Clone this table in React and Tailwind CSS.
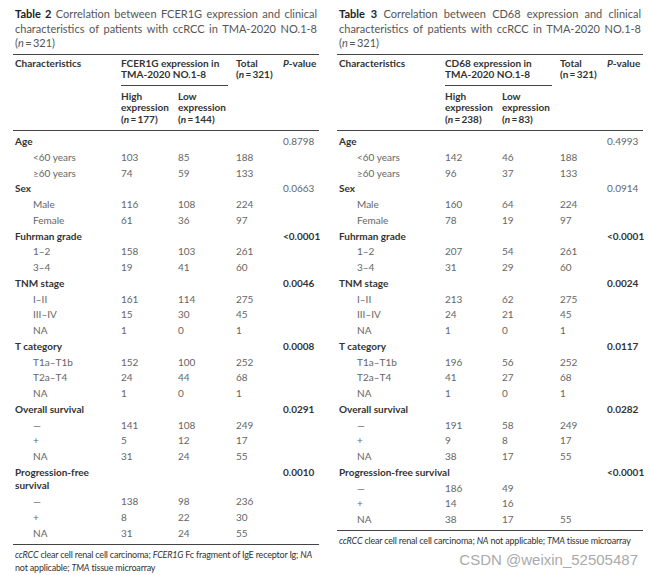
import React from "react";

const T2 = {
  num: "2",
  gene: "FCER1G",
  high: "177",
  low: "144",
  italicN: true,
  rows: [
    { cat: "Age", p: "0.8798" },
    { label: "<60 years", v: ["103", "85", "188"] },
    { label: "≥60 years", v: ["74", "59", "133"] },
    { cat: "Sex", p: "0.0663" },
    { label: "Male", v: ["116", "108", "224"] },
    { label: "Female", v: ["61", "36", "97"] },
    { cat: "Fuhrman grade", p: "<0.0001", bold: true },
    { label: "1–2", v: ["158", "103", "261"] },
    { label: "3–4", v: ["19", "41", "60"] },
    { cat: "TNM stage", p: "0.0046", bold: true },
    { label: "I–II", v: ["161", "114", "275"] },
    { label: "III–IV", v: ["15", "30", "45"] },
    { label: "NA", v: ["1", "0", "1"] },
    { cat: "T category", p: "0.0008", bold: true },
    { label: "T1a–T1b", v: ["152", "100", "252"] },
    { label: "T2a–T4", v: ["24", "44", "68"] },
    { label: "NA", v: ["1", "0", "1"] },
    { cat: "Overall survival", p: "0.0291", bold: true },
    { label: "—", v: ["141", "108", "249"] },
    { label: "+", v: ["5", "12", "17"] },
    { label: "NA", v: ["31", "24", "55"] },
    { cat: ["Progression-free", "survival"], p: "0.0010", bold: true },
    { label: "—", v: ["138", "98", "236"] },
    { label: "+", v: ["8", "22", "30"] },
    { label: "NA", v: ["31", "24", "55"] },
  ],
};

const T3 = {
  num: "3",
  gene: "CD68",
  high: "238",
  low: "83",
  italicN: false,
  rows: [
    { cat: "Age", p: "0.4993" },
    { label: "<60 years", v: ["142", "46", "188"] },
    { label: "≥60 years", v: ["96", "37", "133"] },
    { cat: "Sex", p: "0.0914" },
    { label: "Male", v: ["160", "64", "224"] },
    { label: "Female", v: ["78", "19", "97"] },
    { cat: "Fuhrman grade", p: "<0.0001", bold: true },
    { label: "1–2", v: ["207", "54", "261"] },
    { label: "3–4", v: ["31", "29", "60"] },
    { cat: "TNM stage", p: "0.0024", bold: true },
    { label: "I–II", v: ["213", "62", "275"] },
    { label: "III–IV", v: ["24", "21", "45"] },
    { label: "NA", v: ["1", "0", "1"] },
    { cat: "T category", p: "0.0117", bold: true },
    { label: "T1a–T1b", v: ["196", "56", "252"] },
    { label: "T2a–T4", v: ["41", "27", "68"] },
    { label: "NA", v: ["1", "0", "1"] },
    { cat: "Overall survival", p: "0.0282", bold: true },
    { label: "—", v: ["191", "58", "249"] },
    { label: "+", v: ["9", "8", "17"] },
    { label: "NA", v: ["38", "17", "55"] },
    { cat: ["Progression-free survival"], p: "<0.0001", bold: true },
    { label: "—", v: ["186", "49", ""] },
    { label: "+", v: ["14", "16", ""] },
    { label: "NA", v: ["38", "17", "55"] },
  ],
};

const N = ({ italic }) => (italic ? <i>n</i> : "n");

const Row = ({ row }) => {
  if (row.cat) {
    const lines = Array.isArray(row.cat) ? row.cat : [row.cat];
    return (
      <div className="grid grid-cols-[106px_57px_58px_47px_1fr]">
        <div className="col-span-4 font-bold text-[#333]">
          {lines.map((l, i) => (
            <div key={i} className={i > 0 ? "-mt-[3px] pb-[1px]" : ""}>{l}</div>
          ))}
        </div>
        <div className={row.bold ? "font-bold text-[#333]" : "text-[#666]"}>{row.p}</div>
      </div>
    );
  }
  return (
    <div className="grid grid-cols-[106px_57px_58px_47px_1fr] text-[#666]">
      <div className="pl-[18px]">{row.label}</div>
      <div>{row.v[0]}</div>
      <div>{row.v[1]}</div>
      <div>{row.v[2]}</div>
      <div />
    </div>
  );
};

const Table = ({ t, footnote }) => {
  const it = t.italicN;
  return (
    <div className="w-[306px] flex flex-col">
      <div className="px-[2px] text-[11px] leading-[14.5px] text-[#555]">
        <div className="text-justify [text-align-last:justify]">
          <span className="font-bold text-[#222]">Table {t.num}</span> Correlation between {t.gene} expression and clinical
        </div>
        <div className="text-justify [text-align-last:justify]">
          characteristics of patients with ccRCC in TMA-2020 NO.1-8
        </div>
        <div>
          (<i>n</i>{"\u2009=\u2009"}321)
        </div>
      </div>
      <div className="mt-[3px] border-t border-[#444]" />
      <div className="grid grid-cols-[106px_57px_58px_47px_1fr] px-[2px] pt-[3px] text-[10px] leading-[11.5px] font-bold text-[#333]">
        <div>Characteristics</div>
        <div className="col-span-2">
          {t.gene} expression in
          <br />
          TMA-2020 NO.1-8
        </div>
        <div>
          Total
          <br />(<N italic={it} />{"\u2009=\u2009"}321)
        </div>
        <div>
          <i>P</i>-value
        </div>
        <div />
        <div className="col-span-2 mt-[4px] mb-[5px] w-[107px] border-t border-[#444]" />
        <div />
        <div />
        <div />
        <div>
          High
          <br />
          expression
          <br />(<i>n</i>{"\u2009=\u2009"}{t.high})
        </div>
        <div>
          Low
          <br />
          expression
          <br />(<i>n</i>{"\u2009=\u2009"}{t.low})
        </div>
      </div>
      <div className="mt-[5px] border-t border-[#444]" />
      <div className="px-[2px] pt-[3px] text-[10px] leading-[15.75px]">
        {t.rows.map((r, i) => (
          <Row key={i} row={r} />
        ))}
      </div>
      <div className="mt-[2px] border-t border-[#444]" />
      <div className="px-[2px] pt-[3px] text-[9px] leading-[13px] tracking-[-0.2px] whitespace-nowrap text-[#333]">
        {footnote}
      </div>
    </div>
  );
};

export default function App() {
  return (
    <div className="relative w-[650px] h-[575px] bg-white overflow-hidden font-['Lato','Open_Sans',sans-serif]">
      <div className="flex gap-[18px] pl-[13px] pt-[7px]">
        <Table
          t={T2}
          footnote={
            <>
              <div>
                <i>ccRCC</i> clear cell renal cell carcinoma; <i>FCER1G</i> Fc fragment of IgE receptor Ig; <i>NA</i>
              </div>
              <div>
                not applicable; <i>TMA</i> tissue microarray
              </div>
            </>
          }
        />
        <Table
          t={T3}
          footnote={
            <div>
              <i>ccRCC</i> clear cell renal cell carcinoma; <i>NA</i> not applicable; <i>TMA</i> tissue microarray
            </div>
          }
        />
      </div>
      <div className="absolute right-[12px] top-[550px] font-['Liberation_Sans',Arial,sans-serif] text-[15px] leading-[20px] text-[#aaa]">
        CSDN @weixin_52505487
      </div>
    </div>
  );
}
